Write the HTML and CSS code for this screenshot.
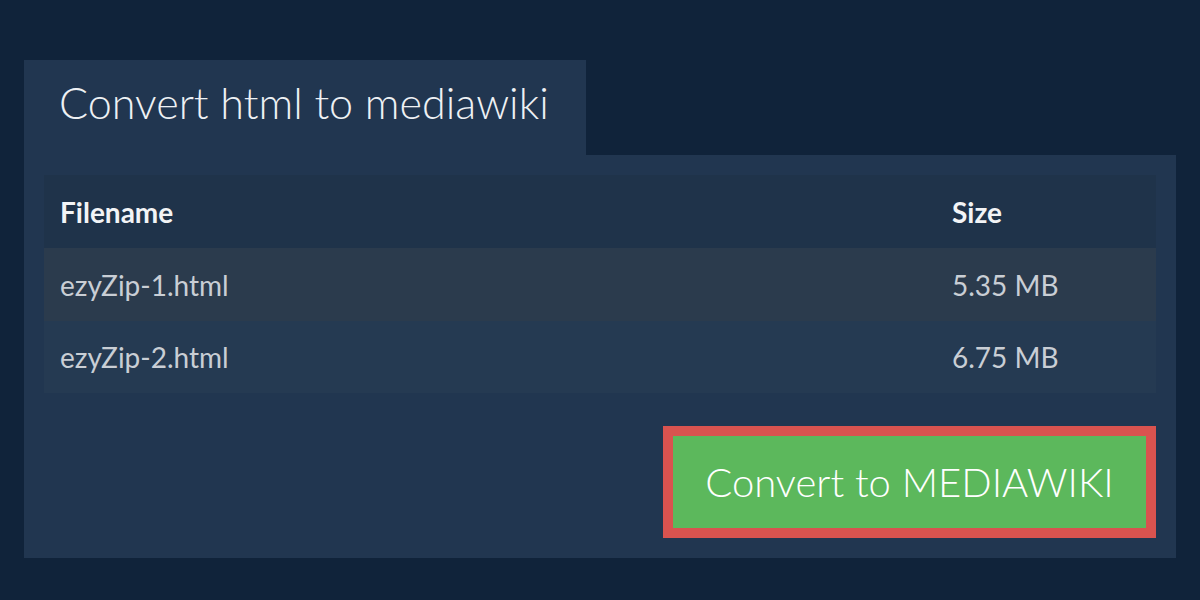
FILE: index.html
```html
<!DOCTYPE html>
<html lang="en">
<head>
<meta charset="utf-8">
<title>Convert html to mediawiki</title>
<link rel="stylesheet" href="styles.css">
</head>
<body>
<div class="page">
  <div class="tab"><h1 class="tab-title">Convert html to mediawiki</h1></div>
  <div class="panel">
    <table class="files">
      <thead>
        <tr><th class="col-name">Filename</th><th class="col-size">Size</th></tr>
      </thead>
      <tbody>
        <tr class="row-odd"><td>ezyZip-1.html</td><td>5.35 MB</td></tr>
        <tr class="row-even"><td>ezyZip-2.html</td><td>6.75 MB</td></tr>
      </tbody>
    </table>
    <div class="actions">
      <button class="convert-btn" type="button">Convert to MEDIAWIKI</button>
    </div>
  </div>
</div>
</body>
</html>
```
FILE: styles.css
```css
html, body {
  margin: 0;
  padding: 0;
}
body {
  background: #10233a;
  font-family: Lato, "Open Sans", sans-serif;
  width: 1200px;
  height: 600px;
  overflow: hidden;
}
.page {
  padding: 60px 24px 0 24px;
}
.tab {
  display: inline-block;
  background: #213650;
  height: 95px;
  padding: 0 37px 0 35px;
  box-sizing: border-box;
}
.tab-title {
  margin: 0;
  font-weight: 300;
  font-size: 43.1px;
  line-height: 85px;
  color: #eef1f4;
}
.panel {
  background: #213650;
  padding: 20px;
  display: flex;
  flex-direction: column;
}
.files {
  width: 1112px;
  border-collapse: collapse;
  border-spacing: 0;
}
.files th,
.files td {
  text-align: left;
  padding: 0 16px;
  font-size: 28px;
  line-height: 1;
}
.files thead tr {
  background: #1f334a;
  height: 73px;
}
.files th {
  font-weight: 700;
  color: #f2f4f6;
}
.col-size {
  width: 188px;
}
.files td {
  color: #c9ced5;
  font-weight: 400;
}
.row-odd {
  background: #2b3b4d;
  height: 73px;
}
.row-even {
  background: #253a52;
  height: 72px;
}
.actions {
  display: flex;
  justify-content: flex-end;
  margin-top: 33px;
}
.convert-btn {
  font-family: Lato, "Open Sans", sans-serif;
  font-weight: 300;
  font-size: 40px;
  color: #ffffff;
  background: #5cb85c;
  border: 10px solid #d9534f;
  width: 493px;
  height: 112px;
  box-sizing: border-box;
  padding: 0;
  cursor: pointer;
}
```
